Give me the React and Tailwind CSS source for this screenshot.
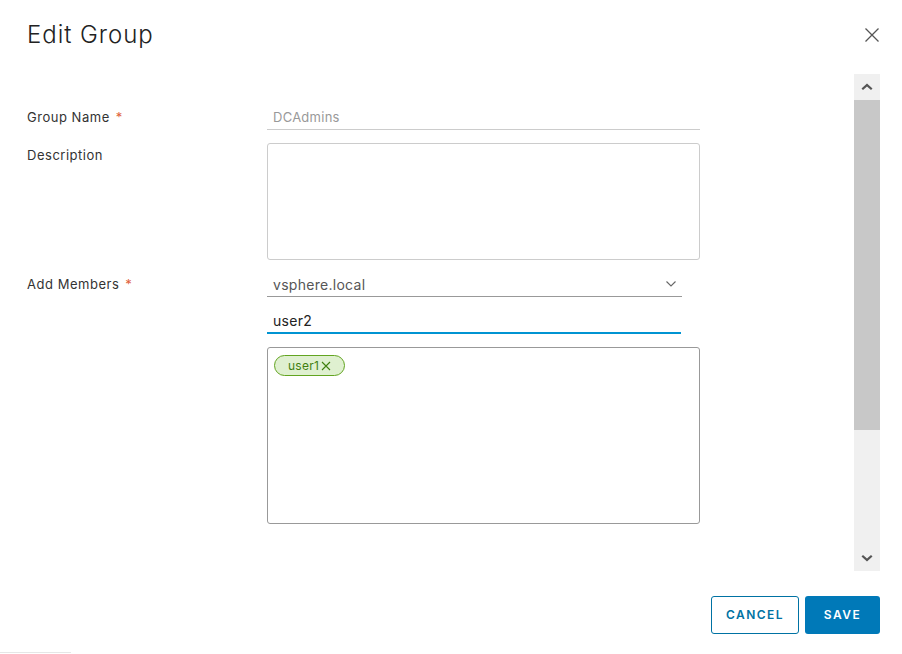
import React from "react";

function CloseIcon({ className }) {
  return (
    <svg viewBox="0 0 16 16" className={className} fill="none" stroke="currentColor" strokeWidth="1.3">
      <path d="M1.5 1.5 L14.5 14.5 M14.5 1.5 L1.5 14.5" />
    </svg>
  );
}

function Chevron({ up, className }) {
  return (
    <svg viewBox="0 0 12 8" className={className} fill="currentColor">
      {up ? <path d="M6 0.5 L11.5 5.5 L10 7 L6 3.4 L2 7 L0.5 5.5 Z" /> : <path d="M6 7.5 L11.5 2.5 L10 1 L6 4.6 L2 1 L0.5 2.5 Z" />}
    </svg>
  );
}

function Label({ children, required, className = "" }) {
  return (
    <div className={`w-[240px] shrink-0 text-[13px] tracking-[0.04em] text-[#333] ${className}`}>
      {children}
      {required && <span className="ml-[6px] text-[#e0623a]">*</span>}
    </div>
  );
}

export default function App() {
  return (
    <div
      className="relative w-[902px] h-[654px] bg-white overflow-hidden text-[#333]"
      style={{ fontFamily: "Inter, 'Noto Sans', sans-serif" }}
    >
      {/* header */}
      <div className="flex justify-between pl-[27px] pr-[22px] pt-[20px] h-[74px] items-start">
        <h1 className="text-[24px] font-light leading-[30px] text-[#222] tracking-[0.04em]">Edit Group</h1>
        <button className="mt-[7px] text-[#555]">
          <CloseIcon className="w-[16px] h-[16px]" />
        </button>
      </div>

      {/* body */}
      <div className="flex pl-[27px] pr-[22px]">
        <div className="flex-1 pt-[31px]">
          <div className="flex">
            <Label required className="pt-[3px]">Group Name</Label>
            <div className="w-[433px] h-[25px] border-b border-[#ccc] pl-[6px] text-[13px] tracking-[0.02em] text-[#999] leading-[24px]">
              DCAdmins
            </div>
          </div>

          <div className="flex mt-[13px]">
            <Label className="pt-[3px]">Description</Label>
            <div className="w-[433px] h-[117px] border border-[#ccc] rounded-[3px]" />
          </div>

          <div className="flex mt-[12px]">
            <Label required className="pt-[3px]">Add Members</Label>
            <div className="flex flex-col">
              <div className="w-[415px] h-[25px] border-b border-[#999] pl-[6px] pr-[6px] flex items-center justify-between text-[14px] tracking-[0.02em] text-[#565656]">
                <span>vsphere.local</span>
                <svg viewBox="0 0 10 6" className="w-[10px] h-[6px] text-[#666]" fill="none" stroke="currentColor" strokeWidth="1.1">
                  <path d="M0.5 0.5 L5 5 L9.5 0.5" />
                </svg>
              </div>
              <div className="w-[414px] h-[24px] mt-[13px] border-b-2 border-[#0094d2] pl-[6px] text-[14px] tracking-[0.02em] text-[#222] leading-[22px]">
                user2
              </div>
              <div className="w-[433px] h-[177px] mt-[13px] border border-[#999] rounded-[3px] pl-[6px] pt-[7px] flex items-start">
                <span className="flex items-center h-[21px] px-[13px] rounded-full border border-[#62a420] bg-[#dff0d0] text-[12px] tracking-[0.02em] text-[#3f7f0f]">
                  user1
                  <svg viewBox="0 0 10 10" className="ml-[2px] w-[10px] h-[10px]" fill="none" stroke="currentColor" strokeWidth="1.1">
                    <path d="M1 1 L9 9 M9 1 L1 9" />
                  </svg>
                </span>
              </div>
            </div>
          </div>
        </div>

        {/* scrollbar */}
        <div className="w-[26px] h-[497px] bg-[#f0f0f0] flex flex-col">
          <div className="h-[26px] flex items-center justify-center text-[#555]">
            <Chevron up className="w-[12px] h-[8px]" />
          </div>
          <div className="h-[330px] bg-[#c8c8c8]" />
          <div className="flex-1" />
          <div className="h-[26px] flex items-center justify-center text-[#555]">
            <Chevron className="w-[12px] h-[8px]" />
          </div>
        </div>
      </div>

      {/* footer */}
      <div className="flex justify-end gap-[6px] pr-[22px] mt-[25px]">
        <button className="w-[88px] h-[38px] rounded-[3px] border border-[#0072a3] text-[#0072a3] text-[12px] font-semibold tracking-[0.12em]">
          CANCEL
        </button>
        <button className="w-[75px] h-[38px] rounded-[3px] bg-[#0079b8] text-white text-[12px] font-semibold tracking-[0.12em]">
          SAVE
        </button>
      </div>

      <div className="absolute left-0 bottom-[1px] w-[71px] h-px bg-[#e6e6e6]" />
    </div>
  );
}
